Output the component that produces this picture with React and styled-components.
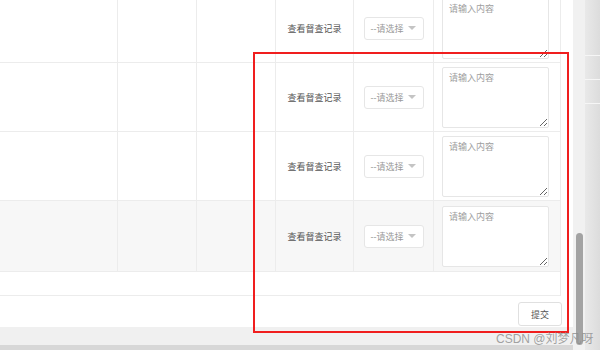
import React from "react";
import styled, { createGlobalStyle } from "styled-components";

const GlobalStyle = createGlobalStyle`
  html, body { margin: 0; padding: 0; }
  body {
    font-family: "Liberation Sans", "Noto Sans CJK SC", sans-serif;
    background: #e2e2e2;
  }
  * { box-sizing: border-box; }
`;

const Screen = styled.div`
  position: relative;
  width: 600px;
  height: 350px;
  overflow: hidden;
  display: flex;
  background: #e2e2e2;
`;

const Main = styled.div`
  width: 573px;
  display: flex;
  flex-direction: column;
`;

const Dialog = styled.div`
  height: 327px;
  background: #fff;
  overflow: hidden;
  display: flex;
  flex-direction: column;
`;

const Band = styled.div`
  height: ${(p) => p.$h}px;
  background: ${(p) => p.$bg};
`;

const TableWrap = styled.div`
  width: 561px;
  margin-top: -6px;
  border-right: 1px solid #ececec;
  border-bottom: 1px solid #ececec;
`;

const Row = styled.div`
  display: grid;
  grid-template-columns: 118px 79px 79px 78px 80px 126px;
  height: ${(p) => p.$h}px;
  background: ${(p) => (p.$hover ? "#f7f7f7" : "#fff")};
  border-bottom: 1px solid #ececec;
`;

const Cell = styled.div`
  display: flex;
  align-items: center;
  justify-content: ${(p) => p.$align || "center"};
  border-right: ${(p) => (p.$last ? "none" : "1px solid #ececec")};
  padding: ${(p) => p.$pad || "0"};
  min-width: 0;
`;

const Label = styled.span`
  font-size: 9px;
  color: #555;
  white-space: nowrap;
`;

const Select = styled.div`
  width: 60px;
  height: 23px;
  border: 1px solid #e6e6e6;
  border-radius: 3px;
  background: #fff;
  display: flex;
  align-items: center;
  justify-content: space-between;
  padding: 0 7px 0 6px;
  font-size: 9px;
  color: #9a9a9a;
  white-space: nowrap;
`;

const Caret = styled.span`
  width: 0;
  height: 0;
  border-left: 4px solid transparent;
  border-right: 4px solid transparent;
  border-top: 4px solid #c4c4c4;
`;

const TextArea = styled.textarea`
  width: 107px;
  height: 61px;
  border: 1px solid #e6e6e6;
  border-radius: 2px;
  padding: 4px 6px;
  font-family: "Liberation Sans", "Noto Sans CJK SC", sans-serif;
  font-size: 9px;
  line-height: 12px;
  color: #606266;
  background: #fff;
  outline: none;
  &::placeholder { color: #9e9e9e; }
`;

const Spacer = styled.div`
  height: 23px;
`;

const Footer = styled.div`
  display: flex;
  justify-content: flex-end;
  padding: 6px 11px 0 0;
`;

const Button = styled.button`
  width: 44px;
  height: 24px;
  border: 1px solid #e0e0e0;
  border-radius: 3px;
  background: #fff;
  font-family: "Liberation Sans", "Noto Sans CJK SC", sans-serif;
  font-size: 9px;
  color: #555;
  padding: 0;
`;

const ScrollTrack = styled.div`
  width: 12px;
  background: #f1f1f1;
  display: flex;
  flex-direction: column;
  align-items: center;
  padding-top: 233px;
`;

const Thumb = styled.div`
  width: 7px;
  height: 112px;
  border-radius: 4px;
  background: #a3a3a3;
`;

const Edge = styled.div`
  flex: 1;
  background: linear-gradient(to right, #e9e9e9, #dcdcdc);
  display: flex;
  flex-direction: column;
`;

const EdgeLine = styled.div`
  height: 1px;
  margin-top: ${(p) => p.$top}px;
  background: #f6f6f6;
`;

const Highlight = styled.div`
  position: absolute;
  left: 253px;
  top: 52px;
  width: 316px;
  height: 281px;
  border: 2px solid #f01e1e;
  pointer-events: none;
`;

const Watermark = styled.div`
  position: absolute;
  left: 496px;
  top: 331px;
  font-size: 12px;
  line-height: 16px;
  color: rgba(140, 140, 140, 0.8);
  white-space: nowrap;
`;

const rows = [69, 69, 69, 71];

export default function App() {
  return (
    <>
      <GlobalStyle />
      <Screen>
        <Main>
          <Dialog>
            <TableWrap>
              {rows.map((h, r) => (
                <Row key={r} $h={h} $hover={r === 3}>
                  <Cell />
                  <Cell />
                  <Cell />
                  <Cell>
                    <Label>查看督查记录</Label>
                  </Cell>
                  <Cell>
                    <Select>
                      <span>--请选择</span>
                      <Caret />
                    </Select>
                  </Cell>
                  <Cell $last $align="flex-start" $pad="0 0 0 8px">
                    <TextArea placeholder="请输入内容" readOnly />
                  </Cell>
                </Row>
              ))}
              <Spacer />
            </TableWrap>
            <Footer>
              <Button>提交</Button>
            </Footer>
          </Dialog>
          <Band $h={18} $bg="#f0f0f0" />
          <Band $h={5} $bg="#d7d7d7" />
        </Main>
        <ScrollTrack>
          <Thumb />
        </ScrollTrack>
        <Edge>
          <EdgeLine $top={55} />
          <EdgeLine $top={23} />
          <EdgeLine $top={23} />
        </Edge>
        <Highlight />
        <Watermark>CSDN @刘梦凡呀</Watermark>
      </Screen>
    </>
  );
}
